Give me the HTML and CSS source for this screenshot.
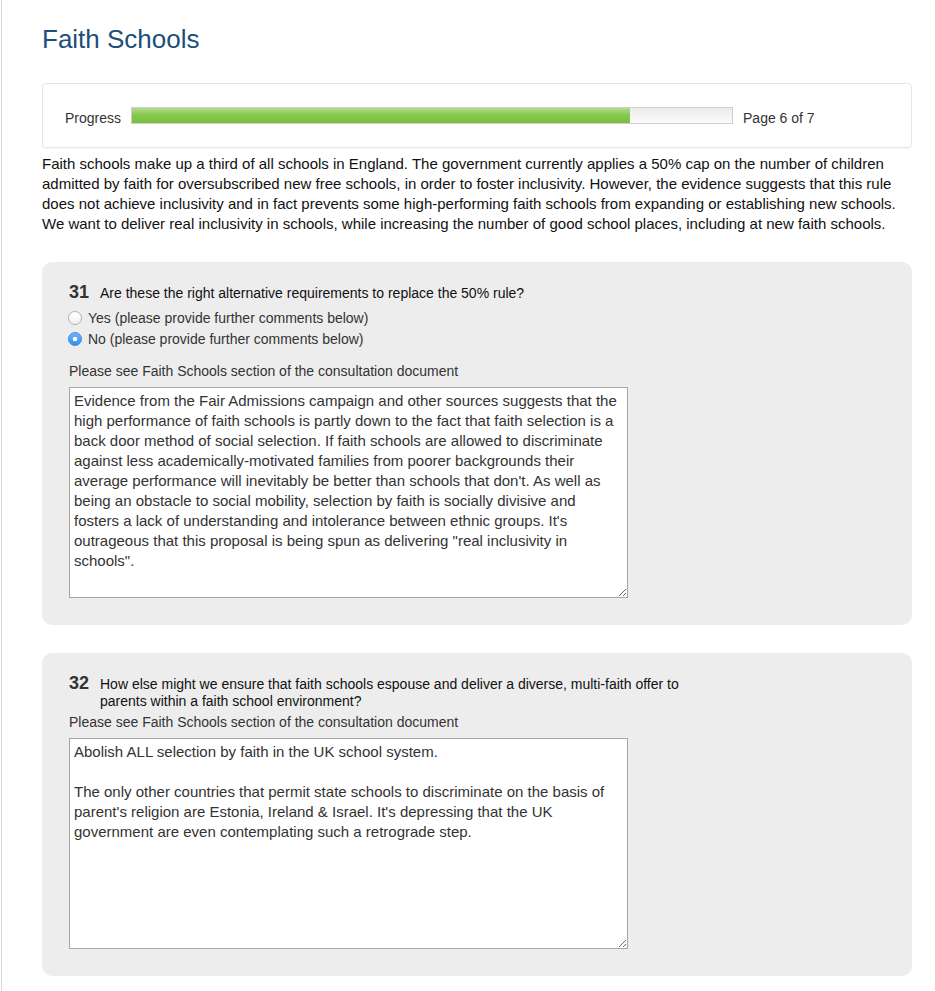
FILE: index.html
```html
<!DOCTYPE html>
<html lang="en">
<head>
    <meta charset="UTF-8">
    <meta name="viewport" content="width=device-width, initial-scale=1.0">
    <title>Faith Schools</title>
    <link rel="stylesheet" href="styles.css">
</head>
<body>
    <div class="page">
        <h1 class="page-title">Faith Schools</h1>

        <div class="progress-box">
            <span class="progress-label">Progress</span>
            <div class="progress-track">
                <div class="progress-fill" style="width: 83%;"></div>
            </div>
            <span class="progress-page">Page 6 of 7</span>
        </div>

        <p class="intro">Faith schools make up a third of all schools in England. The government currently applies a 50% cap on the number of children admitted by faith for oversubscribed new free schools, in order to foster inclusivity. However, the evidence suggests that this rule does not achieve inclusivity and in fact prevents some high-performing faith schools from expanding or establishing new schools. We want to deliver real inclusivity in schools, while increasing the number of good school places, including at new faith schools.</p>

        <div class="question">
            <div class="q-head">
                <span class="q-num">31</span>
                <span class="q-text">Are these the right alternative requirements to replace the 50% rule?</span>
            </div>
            <div class="options">
                <label class="option"><input type="radio" name="q31"> Yes (please provide further comments below)</label>
                <label class="option"><input type="radio" name="q31" checked> No (please provide further comments below)</label>
            </div>
            <div class="hint hint-after-options">Please see Faith Schools section of the consultation document</div>
            <textarea class="answer">Evidence from the Fair Admissions campaign and other sources suggests that the
high performance of faith schools is partly down to the fact that faith selection is a
back door method of social selection. If faith schools are allowed to discriminate
against less academically-motivated families from poorer backgrounds their
average performance will inevitably be better than schools that don't. As well as
being an obstacle to social mobility, selection by faith is socially divisive and
fosters a lack of understanding and intolerance between ethnic groups. It's
outrageous that this proposal is being spun as delivering "real inclusivity in
schools".</textarea>
        </div>

        <div class="question">
            <div class="q-head">
                <span class="q-num">32</span>
                <span class="q-text">How else might we ensure that faith schools espouse and deliver a diverse, multi-faith offer to parents within a faith school environment?</span>
            </div>
            <div class="hint">Please see Faith Schools section of the consultation document</div>
            <textarea class="answer">Abolish ALL selection by faith in the UK school system.

The only other countries that permit state schools to discriminate on the basis of
parent's religion are Estonia, Ireland &amp; Israel. It's depressing that the UK
government are even contemplating such a retrograde step.</textarea>
        </div>
    </div>
</body>
</html>
```

FILE: styles.css
```css
body {
    margin: 0;
    font-family: "Liberation Sans", Arial, Helvetica, sans-serif;
    font-size: 14px;
    color: #000;
    background-color: #fff;
}

.page {
    margin-left: 1px;
    border-left: 1px solid #d9d9d9;
    padding: 0 23px 0 40px;
    min-height: 991px;
    box-sizing: border-box;
}

.page-title {
    margin: 0 0 29px;
    padding-top: 24px;
    font-size: 26px;
    line-height: 30px;
    font-weight: normal;
    color: #1d4f7a;
}

.progress-box {
    display: flex;
    align-items: center;
    height: 65px;
    box-sizing: border-box;
    padding: 0 22px;
    border: 1px solid #e6e6e6;
    border-radius: 4px;
    box-shadow: 0 1px 2px rgba(0, 0, 0, 0.04);
    color: #333;
}

.progress-label,
.progress-page {
    padding-top: 4px;
}

.progress-label {
    margin-right: 10px;
}

.progress-track {
    width: 602px;
    height: 17px;
    box-sizing: border-box;
    border: 1px solid #cfcfcf;
    background: linear-gradient(#ececec, #fbfbfb);
}

.progress-fill {
    height: 100%;
    background: linear-gradient(#b3dd90, #86c84f 45%, #78c03f);
}

.progress-page {
    margin-left: 10px;
}

.intro {
    margin: 6px 0 28px;
    font-size: 15px;
    line-height: 20px;
    color: #111;
}

.question {
    background-color: #ededed;
    border-radius: 10px;
    padding: 22px 27px 27px;
    margin-bottom: 28px;
    color: #333;
}

.question:last-child {
    margin-bottom: 14px;
}

.q-head {
    display: flex;
    align-items: baseline;
    line-height: 17px;
}

.q-num {
    width: 31px;
    flex-shrink: 0;
    font-size: 18px;
    font-weight: bold;
    color: #333;
}

.q-text {
    max-width: 590px;
    color: #111;
}

.options {
    margin-top: 5px;
}

.option {
    display: flex;
    align-items: center;
    height: 21px;
}

.option input {
    appearance: none;
    -webkit-appearance: none;
    width: 14px;
    height: 14px;
    margin: 0 6px 0 -1px;
    border-radius: 50%;
    border: 1px solid #b0b0b0;
    background: linear-gradient(#fff, #f2f2f2);
    box-sizing: border-box;
}

.option input:checked {
    border-color: #3d8de3;
    background: radial-gradient(circle, #fff 0, #fff 2px, transparent 2.6px),
        linear-gradient(#6db4fb, #3590f2);
}

.hint {
    margin-top: 4px;
    margin-bottom: 7px;
    line-height: 17px;
}

.hint-after-options {
    margin-top: 14px;
}

.answer {
    display: block;
    width: 559px;
    height: 211px;
    box-sizing: border-box;
    margin: 0;
    padding: 3px 4px;
    border: 1px solid #a6a6a6;
    background-color: #fff;
    font-family: "Liberation Sans", Arial, Helvetica, sans-serif;
    font-size: 15px;
    line-height: 20px;
    color: #333;
    overflow: hidden;
}
```
